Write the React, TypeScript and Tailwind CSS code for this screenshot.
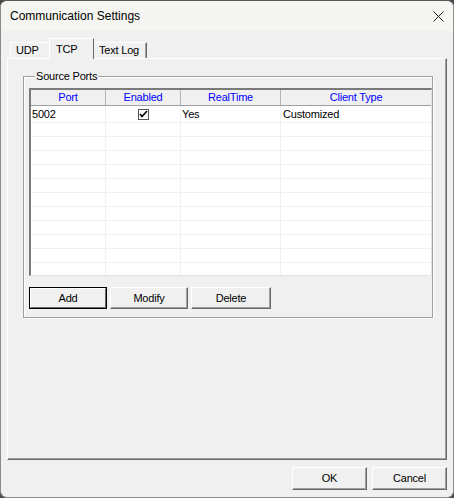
const rows = [
  { port: "5002", enabled: true, realTime: "Yes", clientType: "Customized" },
];

const emptyRows = Array.from({ length: 11 });

const font = "font-['Liberation_Sans',Arial,sans-serif]";

const btn =
  "h-[22px] bg-[#f0f0f0] border-t border-l border-white border-b border-r border-b-[#696969] border-r-[#696969] shadow-[inset_-1px_-1px_0_#a0a0a0] text-[11px] text-black tracking-[-0.2px] flex items-center justify-center";

const Check = () => (
  <div className="w-[11px] h-[11px] border border-[#555] bg-white flex items-center justify-center">
    <svg width="9" height="9" viewBox="0 0 9 9">
      <path d="M1 4 L3 6.5 L8 1" fill="none" stroke="#000" strokeWidth="1.6" />
    </svg>
  </div>
);

const App = () => {
  return (
    <div className={`w-[454px] h-[498px] bg-[#4a4a4a] ${font}`}>
      <div className="w-full h-full flex flex-col bg-[#f0f0f0] border border-[#8c8c8c] border-t-[#5a5a5a] rounded-[7px] overflow-hidden">
        {/* title bar */}
        <div className="h-[30px] shrink-0 bg-[#f5f5f1] flex items-center justify-between pl-[9px] pr-[9px]">
          <span className="text-[12px] text-black">Communication Settings</span>
          <svg width="11" height="11" viewBox="0 0 11 11" className="mt-[1px]">
            <path d="M0.5 0.5 L10.5 10.5 M10.5 0.5 L0.5 10.5" stroke="#1a1a1a" strokeWidth="1" />
          </svg>
        </div>

        <div className="flex-1 flex flex-col px-[6px]">
          {/* tabs */}
          <div className="h-[27px] flex items-end pl-[3px] text-[11px] tracking-[-0.2px] text-black">
            <div className="w-[40px] h-[16px] border-t border-l border-white flex items-center pl-[5px]">
              UDP
            </div>
            <div className="relative z-10 -mb-[1px] -ml-[1px] w-[45px] h-[21px] bg-[#f0f0f0] border-t border-l border-white border-r border-r-[#696969] flex items-start pt-[2px] pl-[6px]">
              TCP
            </div>
            <div className="w-[53px] h-[16px] border-t border-white border-r border-r-[#696969] shadow-[inset_-1px_0_0_#a0a0a0] flex items-center pl-[5px]">
              Text Log
            </div>
          </div>

          {/* panel */}
          <div className="h-[402px] border-t border-l border-white border-r border-b border-r-[#696969] border-b-[#696969] shadow-[inset_-1px_-1px_0_#a0a0a0] pt-[11px] pl-[15px] pr-[14px]">
            <fieldset className="w-[410px] border border-[#a0a0a0] shadow-[1px_1px_0_#fff,inset_1px_1px_0_#fff] pl-[5px] pb-[8px]">
              <legend className="ml-[6px] px-[1px] text-[11px] leading-[13px] tracking-[-0.2px] text-black">
                Source Ports
              </legend>

              {/* list */}
              <div className="mt-[5px] h-[188px] bg-white border-t-2 border-l-2 border-[#7a7a7a] border-r border-b border-r-[#e3e3e3] border-b-[#e3e3e3] overflow-hidden text-[11px] tracking-[-0.2px]">
                <div className="h-[16px] flex bg-[#f0f0f0] border-b border-[#a0a0a0] text-[#0000ff]">
                  <div className="w-[75px] shrink-0 border-r border-[#b4b4b4] flex items-center justify-center">Port</div>
                  <div className="w-[75px] shrink-0 border-r border-[#b4b4b4] flex items-center justify-center">Enabled</div>
                  <div className="w-[100px] shrink-0 border-r border-[#b4b4b4] flex items-center justify-center">RealTime</div>
                  <div className="flex-1 flex items-center justify-center">Client Type</div>
                </div>
                {rows.map((r, i) => (
                  <div key={i} className="h-[17px] flex border-b border-[#f0f0f0] text-black">
                    <div className="w-[75px] shrink-0 border-r border-[#f0f0f0] flex items-center pl-[1px]">{r.port}</div>
                    <div className="w-[75px] shrink-0 border-r border-[#f0f0f0] flex items-center justify-center pl-[1px]">
                      {r.enabled && <Check />}
                    </div>
                    <div className="w-[100px] shrink-0 border-r border-[#f0f0f0] flex items-center pl-[1px]">{r.realTime}</div>
                    <div className="flex-1 flex items-center pl-[2px]">{r.clientType}</div>
                  </div>
                ))}
                {emptyRows.map((_, i) => (
                  <div key={i} className="h-[14px] flex border-b border-[#f0f0f0]">
                    <div className="w-[75px] shrink-0 border-r border-[#f0f0f0]" />
                    <div className="w-[75px] shrink-0 border-r border-[#f0f0f0]" />
                    <div className="w-[100px] shrink-0 border-r border-[#f0f0f0]" />
                    <div className="flex-1" />
                  </div>
                ))}
              </div>

              {/* list buttons */}
              <div className="mt-[11px] flex gap-[3px]">
                <div className="w-[78px] h-[22px] border border-black">
                  <div className="w-full h-full bg-[#f0f0f0] border-t border-l border-white border-b border-r border-b-[#696969] border-r-[#696969] text-[11px] tracking-[-0.2px] text-black flex items-center justify-center">
                    Add
                  </div>
                </div>
                <div className={`${btn} w-[78px]`}>Modify</div>
                <div className={`${btn} w-[80px]`}>Delete</div>
              </div>
            </fieldset>
          </div>

          {/* dialog buttons */}
          <div className="mt-[7px] flex justify-end gap-[5px]">
            <div className={`${btn} !h-[23px] w-[75px]`}>OK</div>
            <div className={`${btn} !h-[23px] w-[75px]`}>Cancel</div>
          </div>
        </div>
      </div>
    </div>
  );
};

export default App;
